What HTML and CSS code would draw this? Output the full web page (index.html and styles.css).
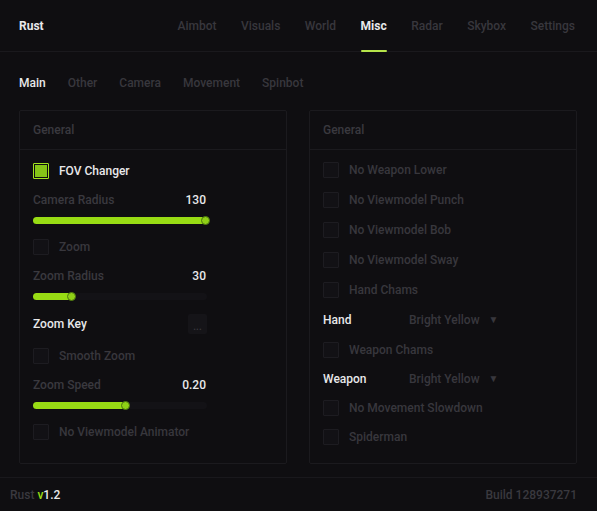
FILE: index.html
```html
<!DOCTYPE html>
<html>
<head>
<meta charset="utf-8">
<link rel="stylesheet" href="styles.css">
</head>
<body>
<div class="app">
  <header class="topbar">
    <div class="brand">Rust</div>
    <nav class="nav">
      <span class="nav-item">Aimbot</span>
      <span class="nav-item">Visuals</span>
      <span class="nav-item">World</span>
      <span class="nav-item active">Misc</span>
      <span class="nav-item">Radar</span>
      <span class="nav-item">Skybox</span>
      <span class="nav-item">Settings</span>
    </nav>
  </header>

  <div class="subtabs">
    <span class="subtab active">Main</span>
    <span class="subtab">Other</span>
    <span class="subtab">Camera</span>
    <span class="subtab">Movement</span>
    <span class="subtab">Spinbot</span>
  </div>

  <main class="panels">
    <section class="panel">
      <div class="panel-head">General</div>
      <div class="panel-body left">
        <div class="cb-row"><span class="cb checked"></span><span class="cb-label on">FOV Changer</span></div>
        <div class="val-row"><span class="muted">Camera Radius</span><span class="value">130</span></div>
        <div class="slider"><div class="fill" style="width:100%"><span class="knob"></span></div></div>
        <div class="cb-row"><span class="cb"></span><span class="cb-label">Zoom</span></div>
        <div class="val-row"><span class="muted">Zoom Radius</span><span class="value">30</span></div>
        <div class="slider"><div class="fill" style="width:23%"><span class="knob"></span></div></div>
        <div class="key-row"><span class="key-label">Zoom Key</span><span class="key-btn">...</span></div>
        <div class="cb-row"><span class="cb"></span><span class="cb-label">Smooth Zoom</span></div>
        <div class="val-row"><span class="muted">Zoom Speed</span><span class="value">0.20</span></div>
        <div class="slider"><div class="fill" style="width:54%"><span class="knob"></span></div></div>
        <div class="cb-row"><span class="cb"></span><span class="cb-label">No Viewmodel Animator</span></div>
      </div>
    </section>

    <section class="panel">
      <div class="panel-head">General</div>
      <div class="panel-body right">
        <div class="r-row"><span class="cb"></span><span class="cb-label">No Weapon Lower</span></div>
        <div class="r-row"><span class="cb"></span><span class="cb-label">No Viewmodel Punch</span></div>
        <div class="r-row"><span class="cb"></span><span class="cb-label">No Viewmodel Bob</span></div>
        <div class="r-row"><span class="cb"></span><span class="cb-label">No Viewmodel Sway</span></div>
        <div class="r-row"><span class="cb"></span><span class="cb-label">Hand Chams</span></div>
        <div class="r-row"><span class="dd-label">Hand</span><span class="dd">Bright Yellow <span class="caret">▼</span></span></div>
        <div class="r-row tight"><span class="cb"></span><span class="cb-label">Weapon Chams</span></div>
        <div class="r-row tight"><span class="dd-label">Weapon</span><span class="dd">Bright Yellow <span class="caret">▼</span></span></div>
        <div class="r-row tight"><span class="cb"></span><span class="cb-label">No Movement Slowdown</span></div>
        <div class="r-row tight"><span class="cb"></span><span class="cb-label">Spiderman</span></div>
      </div>
    </section>
  </main>

  <footer class="footer">
    <span class="ver"><span class="muted">Rust</span> <span class="green">v</span><span class="white">1.2</span></span>
    <span class="muted">Build 128937271</span>
  </footer>
</div>
</body>
</html>
```

FILE: styles.css
```css
* { box-sizing: border-box; }
html, body { margin: 0; padding: 0; }
body {
  background: #0f0e11;
  font-family: Roboto, "Liberation Sans", sans-serif;
  font-size: 12px;
  font-weight: 500;
  color: #3a393f;
}
.app {
  width: 597px;
  height: 511px;
  display: flex;
  flex-direction: column;
  overflow: hidden;
}
.topbar {
  height: 52px;
  border-bottom: 1px solid #1a191d;
  display: flex;
  align-items: center;
  justify-content: space-between;
  padding: 0 22px 0 19px;
}
.brand { color: #e8e8ea; font-weight: 700; margin-top: 1px; }
.nav { display: flex; gap: 24.5px; height: 100%; }
.nav-item {
  position: relative;
  display: flex;
  align-items: center;
  height: 100%;
  color: #38373d;
  padding-top: 1px;
}
.nav-item.active { color: #e8e8ea; font-weight: 700; }
.nav-item.active::after {
  content: "";
  position: absolute;
  left: 0;
  right: 0;
  bottom: -1px;
  height: 2px;
  background: #b6e44a;
  border-radius: 1px;
}
.subtabs {
  height: 58px;
  display: flex;
  align-items: center;
  gap: 22px;
  padding: 3px 19px 0;
  color: #38373d;
}
.subtab.active { color: #e8e8ea; }
.panels {
  display: flex;
  gap: 22px;
  padding: 0 20px 0 19px;
  height: 354px;
}
.panel {
  width: 268px;
  height: 354px;
  border: 1px solid #1b1a1e;
  border-radius: 2px;
}
.panel-head {
  height: 39px;
  border-bottom: 1px solid #1b1a1e;
  display: flex;
  align-items: center;
  padding: 0 13px 1px;
  color: #3a393f;
}
.panel-body { padding: 7px 0 0 13px; }
.panel-body.left { width: 187px; }
.cb-row, .r-row {
  height: 28px;
  display: flex;
  align-items: center;
}
.r-row { height: 30px; }
.r-row.tight { height: 29px; }
.panel-body.right { padding-top: 5px; }
.cb {
  width: 16px;
  height: 16px;
  border: 1px solid #1d1c21;
  background: #121115;
  border-radius: 1px;
  flex: none;
}
.cb.checked {
  border: 1px solid #a2e41e;
  background: #86c417;
  box-shadow: inset 0 0 0 1px #0f0e11;
}
.cb-label { margin-left: 10px; color: #38373d; }
.cb-label.on { color: #e8e8ea; }
.val-row {
  height: 30px;
  display: flex;
  align-items: center;
  justify-content: space-between;
}
.value { color: #e8e8ea; margin-right: 1px; }
.slider {
  height: 10px;
  margin-bottom: 8px;
  display: flex;
  align-items: center;
  position: relative;
}
.slider::before {
  content: "";
  position: absolute;
  left: 0;
  right: 0;
  top: 2px;
  height: 7px;
  border-radius: 4px;
  background: #131216;
}
.fill {
  position: relative;
  height: 7px;
  border-radius: 4px;
  background: #98dc14;
}
.knob {
  position: absolute;
  right: -3px;
  top: -1px;
  width: 9px;
  height: 9px;
  border-radius: 50%;
  background: #8fd016;
  border: 1.5px solid #4b7410;
}
.key-row {
  height: 30px;
  margin-bottom: 3px;
  display: flex;
  align-items: center;
  justify-content: space-between;
}
.key-label, .dd-label { color: #e8e8ea; }
.key-btn {
  width: 19px;
  height: 20px;
  background: #151418;
  border-radius: 2px;
  color: #3a393f;
  font-size: 10px;
  display: flex;
  align-items: flex-end;
  justify-content: center;
  line-height: 14px;
}
.dd-label { width: 86px; }
.dd { color: #38373d; }
.caret { font-size: 10px; margin-left: 6px; vertical-align: 1px; }
.footer {
  margin-top: 13px;
  border-top: 1px solid #19181c;
  flex: 1;
  display: flex;
  align-items: center;
  justify-content: space-between;
  padding: 1px 20px 0 10px;
}
.muted { color: #3a393f; }
.green { color: #9be015; }
.white { color: #e8e8ea; }
```
